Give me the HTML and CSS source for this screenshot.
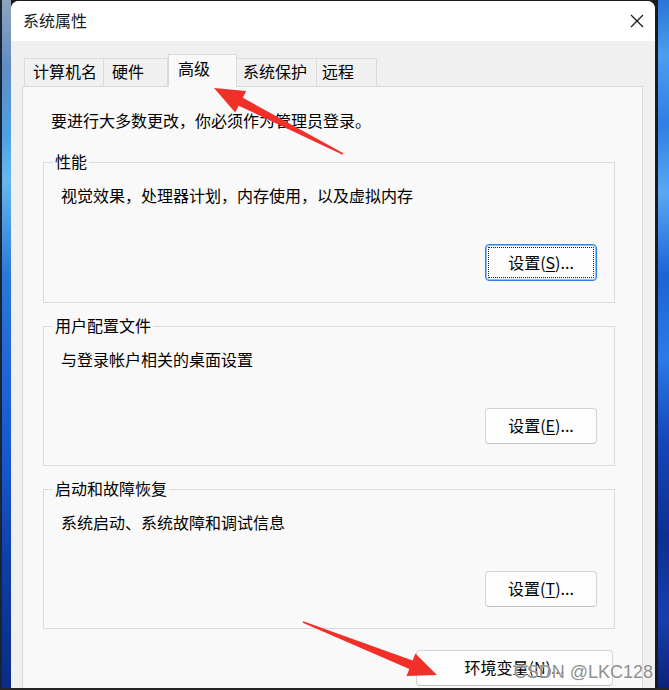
FILE: index.html
```html
<!DOCTYPE html>
<html lang="zh-CN">
<head>
<meta charset="utf-8">
<title>系统属性</title>
<link rel="stylesheet" href="styles.css">
</head>
<body>
<div class="screen">
  <div class="wall wall-left"></div>
  <div class="window">
    <div class="titlebar">
      <span class="title">系统属性</span>
      <span class="close">
        <svg width="14" height="14" viewBox="0 0 14 14"><path d="M1 1 L13 13 M13 1 L1 13" stroke="#1a1a1a" stroke-width="1.3" fill="none"/></svg>
      </span>
    </div>
    <div class="client">
      <div class="tabs">
        <div class="tab tab-name">计算机名</div>
        <div class="tab tab-hw">硬件</div>
        <div class="tab tab-adv active">高级</div>
        <div class="tab tab-prot">系统保护</div>
        <div class="tab tab-remote">远程</div>
      </div>
      <div class="panel">
        <p class="intro">要进行大多数更改，你必须作为管理员登录。</p>
        <div class="group">
          <div class="group-title">性能</div>
          <div class="group-desc">视觉效果，处理器计划，内存使用，以及虚拟内存</div>
          <div class="group-actions"><button class="btn btn-default">设置(<u>S</u>)...</button></div>
        </div>
        <div class="group">
          <div class="group-title">用户配置文件</div>
          <div class="group-desc">与登录帐户相关的桌面设置</div>
          <div class="group-actions"><button class="btn">设置(<u>E</u>)...</button></div>
        </div>
        <div class="group">
          <div class="group-title">启动和故障恢复</div>
          <div class="group-desc">系统启动、系统故障和调试信息</div>
          <div class="group-actions"><button class="btn">设置(<u>T</u>)...</button></div>
        </div>
        <div class="panel-actions"><button class="btn btn-wide">环境变量(<u>N</u>)...</button></div>
      </div>
    </div>
  </div>
  <div class="wall wall-right"></div>
</div>
<div class="taskbar-edge"></div>
<svg class="annotations" width="669" height="690" viewBox="0 0 669 690">
  <polygon fill="#f2302a" points="214,88 246.2,91.0 242.8,97.7 343.4,153.3 342.6,154.7 238.7,105.7 235.2,112.4"/>
  <polygon fill="#f2302a" points="437,675 406.5,675.9 409.3,668.9 302.7,622.7 303.3,621.3 412.6,660.5 415.4,653.5"/>
</svg>
<span class="watermark">CSDN @LKC128</span>
</body>
</html>
```
FILE: styles.css
```css
html, body {
  margin: 0;
  padding: 0;
}
body {
  width: 669px;
  height: 690px;
  overflow: hidden;
  background: #1c1c1c;
  position: relative;
  font-family: "Noto Sans CJK SC", "Microsoft YaHei", sans-serif;
  color: #000;
}
.screen {
  display: flex;
  height: 688px;
}
.wall-left {
  width: 11px;
  background: linear-gradient(180deg, #8ea4bc 0%, #5f8cc4 10%, #4da2e4 20%, #66b8ee 26%, #2b78d8 40%, #1e64d8 55%, #1656cc 68%, #0e3ea6 82%, #0b2c86 100%);
  box-shadow: inset 2px 0 0 #1b2434;
}
.wall-right {
  width: 14px;
  background: linear-gradient(180deg, #2a74d6 0%, #4c9ef0 8%, #2f7fe4 18%, #5aa8f4 28%, #1d63d6 40%, #2c7ae8 52%, #1448b8 64%, #0d2f92 78%, #173fae 90%, #0a2476 100%);
  box-shadow: inset 3px 0 0 #17191f;
}
.window {
  width: 644px;
  height: 687px;
  margin-top: 1px;
  display: flex;
  flex-direction: column;
  border-radius: 8px 8px 0 0;
  overflow: hidden;
  background: #f0f0f0;
}
.titlebar {
  height: 40px;
  flex: none;
  background: #ffffff;
  display: flex;
  align-items: center;
  justify-content: space-between;
  padding-left: 12px;
}
.title {
  font-size: 16px;
  line-height: 20px;
  color: #1a1a1a;
  padding-bottom: 2px;
}
.close {
  width: 36px;
  height: 40px;
  display: flex;
  align-items: center;
  justify-content: center;
}
.client {
  flex: 1;
  min-height: 0;
  display: flex;
  flex-direction: column;
  padding: 13px 12px 0 11px;
  background: #f0f0f0;
}
.tabs {
  display: flex;
  align-items: flex-end;
  height: 33px;
  flex: none;
  padding-left: 2px;
  margin-bottom: -1px;
  position: relative;
  z-index: 1;
}
.tab {
  box-sizing: border-box;
  height: 28px;
  margin-bottom: 1px;
  border: 1px solid #dadada;
  border-bottom: none;
  background: #f0f0f0;
  font-size: 16px;
  line-height: 20px;
  display: flex;
  align-items: center;
  padding-bottom: 4px;
  color: #000;
}
.tab.active {
  height: 33px;
  margin-bottom: 0;
  background: #f9f9f9;
  padding-bottom: 6px;
}
.tab-name { width: 80px; padding-left: 8px; }
.tab-hw { width: 64px; padding-left: 8px; border-left: none; }
.tab-adv { width: 69px; padding-left: 9px; }
.tab-prot { width: 80px; padding-left: 6px; border-left: none; }
.tab-remote { width: 60px; padding-left: 5px; border-left: none; }
.panel {
  flex: 1;
  min-height: 0;
  background: #f9f9f9;
  border: 1px solid #dadada;
  border-bottom: none;
  padding: 23px 27px 0 20px;
}
.intro {
  margin: 0 0 0 8px;
  font-size: 16px;
  line-height: 20px;
}
.group {
  margin-top: 23px;
  border: 1px solid #dcdcdc;
  padding: 0 17px 21px;
  display: flex;
  flex-direction: column;
}
.intro + .group {
  margin-top: 32px;
}
.group-title {
  align-self: flex-start;
  margin: -12px 0 0 -8px;
  padding: 0 2px;
  background: #f9f9f9;
  font-size: 16px;
  line-height: 20px;
}
.group-desc {
  margin-top: 14px;
  font-size: 16px;
  line-height: 20px;
}
.group-actions {
  display: flex;
  justify-content: flex-end;
  margin-top: 39px;
}
.panel-actions {
  display: flex;
  justify-content: flex-end;
  margin-top: 21px;
  padding-right: 2px;
}
.btn {
  box-sizing: border-box;
  width: 112px;
  height: 36px;
  padding: 0 0 2px;
  margin: 0;
  background: #fdfdfd;
  border: 1px solid #d3d3d3;
  border-bottom-color: #c2c2c2;
  border-radius: 4px;
  font-family: "Noto Sans CJK SC", sans-serif;
  font-size: 16px;
  line-height: 20px;
  color: #000;
  display: flex;
  align-items: center;
  justify-content: center;
}
.btn u {
  text-underline-offset: 2px;
}
.btn-default {
  height: 37px;
  border: 1px solid #2f82d8;
  box-shadow: inset 0 0 0 1px #8fc2f0;
  outline: 1px dotted #222;
  outline-offset: -4px;
}
.btn-wide {
  width: 197px;
  height: 36px;
}
.taskbar-edge {
  height: 2px;
  background: #262626;
}
.annotations {
  position: absolute;
  left: 0;
  top: 0;
  pointer-events: none;
}
.watermark {
  position: absolute;
  right: 16px;
  top: 661px;
  font-family: "Liberation Sans", Arial, sans-serif;
  font-size: 18px;
  line-height: 22px;
  color: #8a8a8a;
  text-shadow: 0 0 2px #ffffff, 0 0 1px #ffffff;
  opacity: 0.95;
}
```
